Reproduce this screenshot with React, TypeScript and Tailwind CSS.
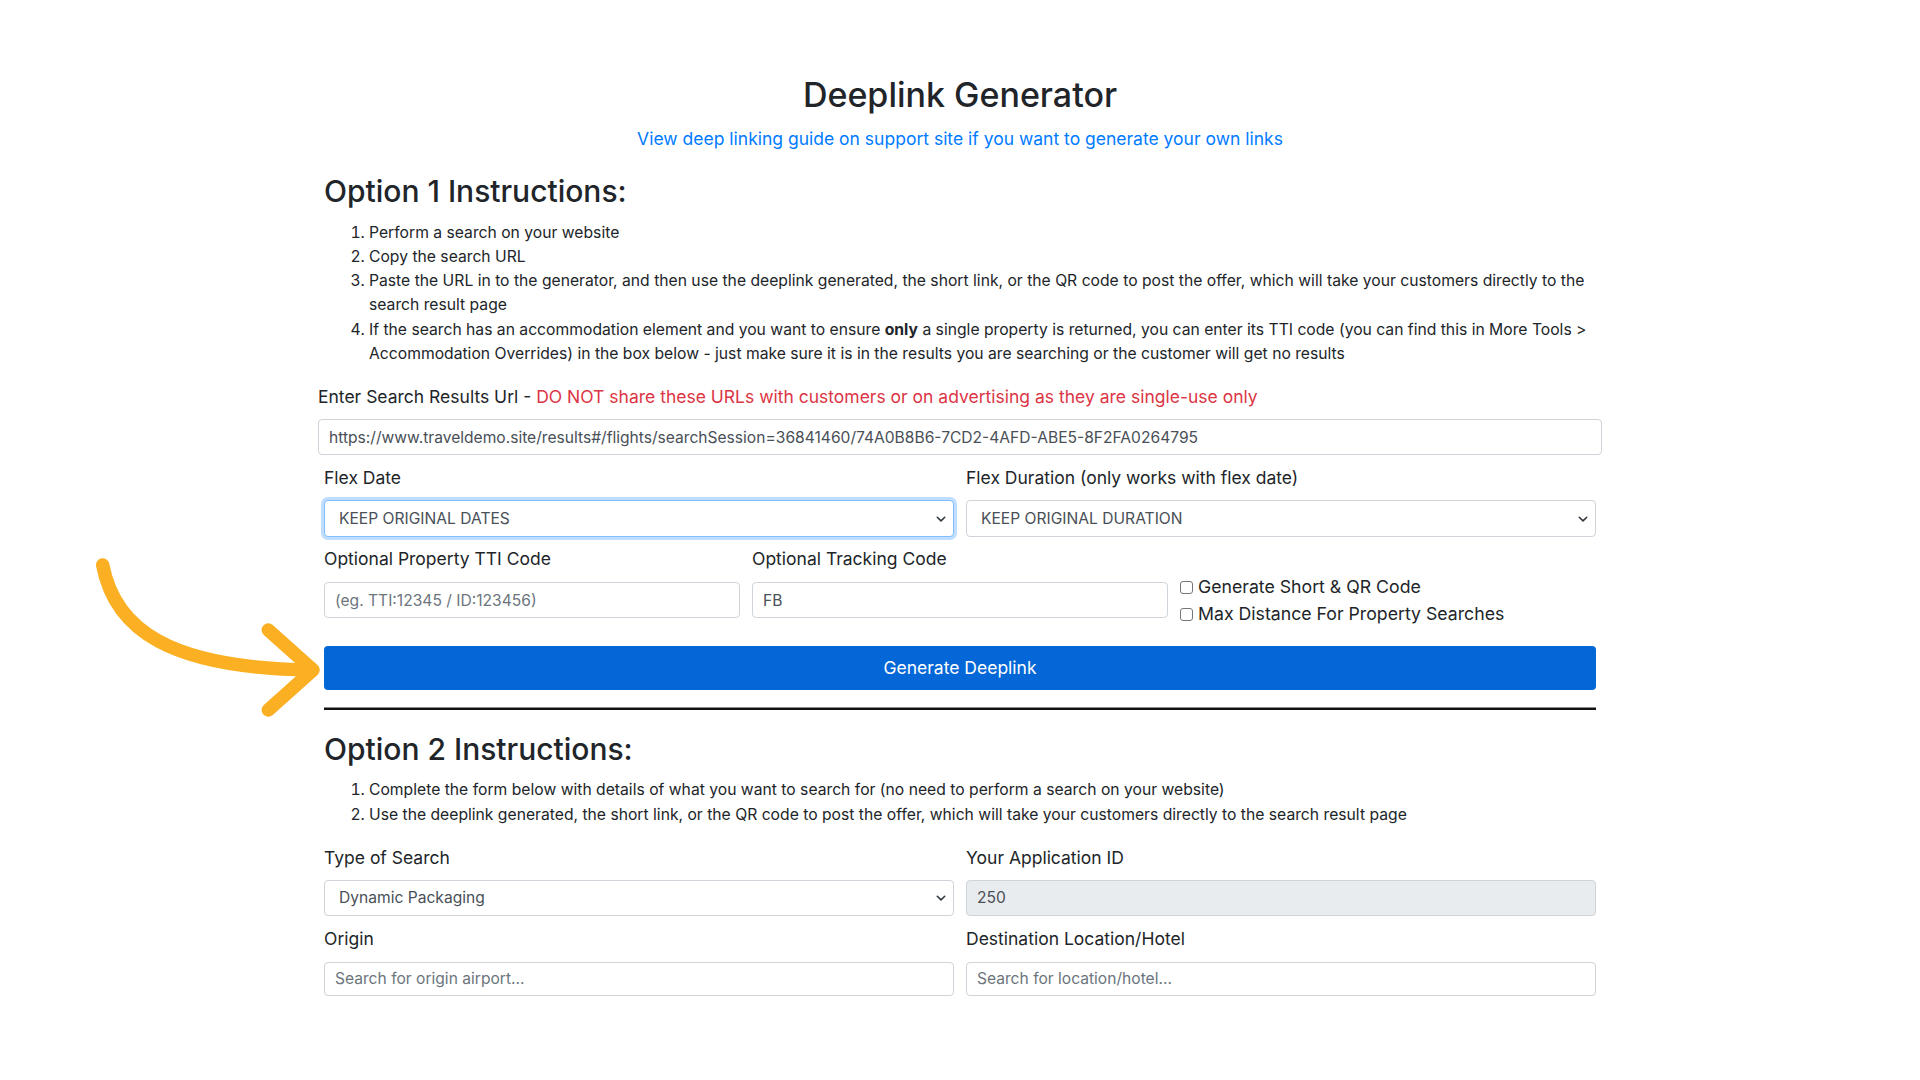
import React from "react";

const Chevron = () => (
  <svg width="10" height="6" viewBox="0 0 10 6" className="shrink-0">
    <path d="M1.3 1.3l3.7 3.6 3.7-3.6" fill="none" stroke="#343a40" strokeWidth="1.6" strokeLinecap="round" strokeLinejoin="round" />
  </svg>
);

function FakeSelect({ text, focus, h = "h-[37px]" }: { text: string; focus?: boolean; h?: string }) {
  return (
    <div
      className={
        "mt-[10px] flex items-center justify-between rounded-[4px] border bg-white pl-[14px] pr-[7px] text-[15.6px] text-[#495057] " +
        h +
        (focus ? " border-[#80bdff] shadow-[0_0_0_3px_rgba(0,123,255,0.25)]" : " border-[#ced4da]")
      }
    >
      <span>{text}</span>
      <Chevron />
    </div>
  );
}

function Input({ value, placeholder, disabled, h = "h-[36px]", mt = "mt-[11px]" }: { value?: string; placeholder?: string; disabled?: boolean; h?: string; mt?: string }) {
  return (
    <div
      className={
        mt +
        " " +
        h +
        " flex items-center rounded-[4px] border border-[#ced4da] px-[10px] text-[15.6px] " +
        (disabled ? "bg-[#e9ecef] text-[#495057]" : "bg-white ") +
        (value ? " text-[#495057]" : " text-[#6c757d]")
      }
    >
      {value ?? placeholder}
    </div>
  );
}

function Label({ children }: { children: React.ReactNode }) {
  return <div className="text-[17.5px] leading-[24px] text-[#212529]">{children}</div>;
}

function Checkbox({ label }: { label: string }) {
  return (
    <div className="flex h-[27px] items-center gap-[5px]">
      <span className="inline-block h-[13px] w-[13px] rounded-[3px] border border-[#767676] bg-white" />
      <span className="text-[17.7px] text-[#212529]">{label}</span>
    </div>
  );
}

export default function App() {
  return (
    <div className="relative h-[1080px] w-full overflow-hidden bg-white font-['Inter',sans-serif] text-[#212529]">
      <div className="ml-[324px] w-[1272px] pt-[74px]">
        <h1 className="text-center text-[34px] font-medium leading-[42px]">Deeplink Generator</h1>
        <div className="mt-[11px] text-center text-[17.5px] leading-[24px] text-[#007bff]">
          View deep linking guide on support site if you want to generate your own links
        </div>

        <h2 className="mt-[21px] text-[30px] font-medium leading-[38px]">Option 1 Instructions:</h2>
        <ol className="mt-[10.5px] list-outside list-decimal whitespace-nowrap pl-[45px] text-[15.7px] leading-[24.3px]">
          <li>Perform a search on your website</li>
          <li>Copy the search URL</li>
          <li>
            Paste the URL in to the generator, and then use the deeplink generated, the short link, or the QR code to post the offer, which will take your customers directly to the
            <br />
            search result page
          </li>
          <li>
            If the search has an accommodation element and you want to ensure <b>only</b> a single property is returned, you can enter its TTI code (you can find this in More Tools &gt;
            <br />
            Accommodation Overrides) in the box below - just make sure it is in the results you are searching or the customer will get no results
          </li>
        </ol>

        <div className="-mx-[6px] mt-[19px]">
          <Label>
            Enter Search Results Url - <span className="text-[#dc3545]">DO NOT share these URLs with customers or on advertising as they are single-use only</span>
          </Label>
          <Input mt="mt-[10px]" value="https://www.traveldemo.site/results#/flights/searchSession=36841460/74A0B8B6-7CD2-4AFD-ABE5-8F2FA0264795" />
        </div>

        <div className="mt-[11px] grid grid-cols-2 gap-x-[12px]">
          <div>
            <Label>Flex Date</Label>
            <FakeSelect text="KEEP ORIGINAL DATES" focus />
          </div>
          <div>
            <Label>Flex Duration (only works with flex date)</Label>
            <FakeSelect text="KEEP ORIGINAL DURATION" />
          </div>
        </div>

        <div className="mt-[10px] grid grid-cols-3 items-start gap-x-[12px]">
          <div>
            <Label>Optional Property TTI Code</Label>
            <Input placeholder="(eg. TTI:12345 / ID:123456)" />
          </div>
          <div>
            <Label>Optional Tracking Code</Label>
            <Input value="FB" />
          </div>
          <div className="h-[71px] pt-[26.6px]">
            <Checkbox label="Generate Short & QR Code" />
            <Checkbox label="Max Distance For Property Searches" />
          </div>
        </div>

        <button className="mt-[28px] flex h-[44px] w-full items-center justify-center rounded-[4px] bg-[#0467d7] text-[17.5px] text-white">
          Generate Deeplink
        </button>

        <div className="mt-[17px] h-[3px] border-t border-[#8a8a8a] bg-[#111]" />

        <h2 className="mt-[19.8px] text-[30px] font-medium leading-[38px]">Option 2 Instructions:</h2>
        <ol className="mt-[10.2px] list-outside list-decimal whitespace-nowrap pl-[45px] text-[15.7px] leading-[24.3px]">
          <li>Complete the form below with details of what you want to search for (no need to perform a search on your website)</li>
          <li>Use the deeplink generated, the short link, or the QR code to post the offer, which will take your customers directly to the search result page</li>
        </ol>

        <div className="mt-[19.2px] grid grid-cols-2 gap-x-[12px]">
          <div>
            <Label>Type of Search</Label>
            <FakeSelect text="Dynamic Packaging" h="h-[36px]" />
          </div>
          <div>
            <Label>Your Application ID</Label>
            <Input mt="mt-[10px]" value="250" disabled />
          </div>
        </div>

        <div className="mt-[10.6px] grid grid-cols-2 gap-x-[12px]">
          <div>
            <Label>Origin</Label>
            <Input placeholder="Search for origin airport..." h="h-[34.5px]" />
          </div>
          <div>
            <Label>Destination Location/Hotel</Label>
            <Input placeholder="Search for location/hotel..." h="h-[34.5px]" />
          </div>
        </div>
      </div>

      <svg className="pointer-events-none absolute left-0 top-0" width="400" height="800" viewBox="0 0 400 800">
        <path d="M102.7 565 C115 630 170 668 311 670" fill="none" stroke="#fbb024" strokeWidth="13.5" strokeLinecap="round" />
        <path d="M268.3 630 L313 670 L268.3 710" fill="none" stroke="#fbb024" strokeWidth="13.5" strokeLinecap="round" strokeLinejoin="round" />
      </svg>
    </div>
  );
}
